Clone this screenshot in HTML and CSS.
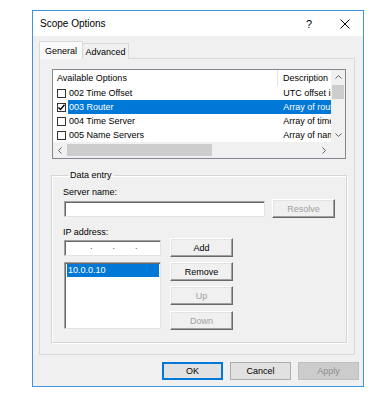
FILE: index.html
```html
<!DOCTYPE html>
<html>
<head>
    <meta charset="UTF-8">
    <title>Scope Options</title>
    <link rel="stylesheet" href="styles.css">
</head>
<body>
    <div class="dialog">
        <div class="titlebar">
            <span class="title">Scope Options</span>
            <span class="help">?</span>
            <span class="close">
                <svg width="10" height="10" viewBox="0 0 10 10"><path d="M0.5 0.5 L9.5 9.5 M9.5 0.5 L0.5 9.5" stroke="#000" stroke-width="1" fill="none"/></svg>
            </span>
        </div>

        <div class="content">
            <div class="tabs">
                <div class="tab active">General</div>
                <div class="tab">Advanced</div>
            </div>

            <div class="panel">
                <!-- options list -->
                <div class="listview">
                    <div class="lv-top">
                        <div class="lv-body">
                            <div class="lv-header">
                                <div class="hd-name">Available Options</div>
                                <div class="hd-desc">Description</div>
                            </div>
                            <div class="lv-row">
                                <span class="check"></span>
                                <div class="col-name">002 Time Offset</div>
                                <div class="col-desc">UTC offset in seconds</div>
                            </div>
                            <div class="lv-row selected">
                                <span class="check">
                                    <svg width="7" height="7" viewBox="0 0 7 7"><path d="M0.5 3.5 L2.5 5.5 L6.5 0.8" stroke="#000" stroke-width="1.4" fill="none"/></svg>
                                </span>
                                <div class="col-name">003 Router</div>
                                <div class="col-desc">Array of router addresses</div>
                            </div>
                            <div class="lv-row">
                                <span class="check"></span>
                                <div class="col-name">004 Time Server</div>
                                <div class="col-desc">Array of time servers</div>
                            </div>
                            <div class="lv-row">
                                <span class="check"></span>
                                <div class="col-name">005 Name Servers</div>
                                <div class="col-desc">Array of name servers</div>
                            </div>
                        </div>
                        <div class="vscroll">
                            <div class="arrow">
                                <svg width="7" height="4" viewBox="0 0 7 4"><path d="M0.5 3.5 L3.5 0.5 L6.5 3.5" stroke="#606060" fill="none"/></svg>
                            </div>
                            <div class="vthumb"></div>
                            <div class="track"></div>
                            <div class="arrow">
                                <svg width="7" height="4" viewBox="0 0 7 4"><path d="M0.5 0.5 L3.5 3.5 L6.5 0.5" stroke="#606060" fill="none"/></svg>
                            </div>
                        </div>
                    </div>
                    <div class="hscroll">
                        <div class="arrow">
                            <svg width="4" height="7" viewBox="0 0 4 7"><path d="M3.5 0.5 L0.5 3.5 L3.5 6.5" stroke="#606060" fill="none"/></svg>
                        </div>
                        <div class="hthumb"></div>
                        <div class="track"></div>
                        <div class="arrow">
                            <svg width="4" height="7" viewBox="0 0 4 7"><path d="M0.5 0.5 L3.5 3.5 L0.5 6.5" stroke="#606060" fill="none"/></svg>
                        </div>
                        <div class="corner"></div>
                    </div>
                </div>

                <fieldset class="group">
                    <legend>Data entry</legend>
                    <div class="label first">Server name:</div>
                    <div class="form-row">
                        <div class="field server"></div>
                        <div class="btn3d disabled resolve">Resolve</div>
                    </div>
                    <div class="label second">IP address:</div>
                    <div class="form-row">
                        <div class="field ip"><span>.</span><span>.</span><span>.</span></div>
                        <div class="btn3d side">Add</div>
                    </div>
                    <div class="list-row">
                        <div class="listbox">
                            <div class="lb-item">10.0.0.10</div>
                        </div>
                        <div class="side-buttons">
                            <div class="btn3d side">Remove</div>
                            <div class="btn3d side disabled up">Up</div>
                            <div class="btn3d side disabled down">Down</div>
                        </div>
                    </div>
                </fieldset>
            </div>

            <div class="buttons">
                <div class="btn default">OK</div>
                <div class="btn">Cancel</div>
                <div class="btn disabled">Apply</div>
            </div>
        </div>
    </div>
</body>
</html>
```

FILE: styles.css
```css
body {
    margin: 0;
    background-color: #fff;
    font-family: "Liberation Sans", Arial, sans-serif;
    font-size: 9px;
    color: #000;
}

.dialog {
    margin: 10px 0 0 32px;
    width: 332px;
    height: 377px;
    box-sizing: border-box;
    border: 1px solid #3f94dc;
    display: flex;
    flex-direction: column;
}

/* title bar */
.titlebar {
    height: 25px;
    background-color: #fff;
    display: flex;
    align-items: center;
    padding-left: 7px;
}

.title {
    flex: 1;
    font-size: 10px;
}

.help {
    width: 34px;
    font-size: 11px;
}

.close {
    display: flex;
    padding-right: 13px;
}

.content {
    flex: 1;
    background-color: #f0f0f0;
    padding: 5px 0 0 6px;
}

/* tabs */
.tabs {
    display: flex;
    align-items: flex-end;
    height: 18px;
    margin-bottom: -1px;
}

.tab {
    box-sizing: border-box;
    height: 16px;
    width: 47px;
    margin-left: -1px;
    border: 1px solid #d9d9d9;
    border-bottom: none;
    background-color: #f0f0f0;
    display: flex;
    align-items: center;
    justify-content: center;
    padding-top: 1px;
}

.tab.active {
    position: relative;
    z-index: 1;
    height: 18px;
    width: 44px;
    margin-left: 0;
    background-color: #f9f9f9;
    padding-top: 0;
}

.panel {
    box-sizing: border-box;
    width: 316px;
    height: 297px;
    border: 1px solid #d9d9d9;
    background-color: #f0f0f0;
    padding: 10px 0 0 12px;
}

/* list view */
.listview {
    box-sizing: border-box;
    width: 294px;
    height: 90px;
    border: 1px solid #828790;
    background-color: #fff;
    display: flex;
    flex-direction: column;
}

.lv-top {
    display: flex;
    height: 72px;
}

.lv-body {
    width: 278px;
    overflow: hidden;
}

.lv-header {
    display: flex;
    height: 16px;
    align-items: center;
}

.hd-name {
    width: 225px;
    box-sizing: border-box;
    padding-left: 4px;
    border-right: 1px solid #e5e5e5;
    line-height: 16px;
}

.hd-desc {
    padding-left: 5px;
    white-space: nowrap;
}

.lv-row {
    display: flex;
    height: 14px;
    align-items: center;
}

.check {
    box-sizing: border-box;
    width: 9px;
    height: 9px;
    margin: 0 2px 0 4px;
    border: 1px solid #333;
    background-color: #fff;
    display: flex;
    align-items: center;
    justify-content: center;
}

.col-name {
    width: 210px;
    height: 14px;
    line-height: 14px;
    padding-left: 1px;
}

.col-desc {
    width: 53px;
    height: 14px;
    line-height: 14px;
    padding-left: 5px;
    box-sizing: border-box;
    white-space: nowrap;
    overflow: hidden;
}

.lv-row.selected .col-name,
.lv-row.selected .col-desc {
    background-color: #0078d7;
    color: #fff;
}

/* scroll bars */
.vscroll {
    width: 14px;
    background-color: #f0f0f0;
    display: flex;
    flex-direction: column;
}

.vscroll .arrow {
    height: 14px;
    display: flex;
    align-items: center;
    justify-content: center;
}

.vthumb {
    height: 14px;
    margin: 1px 1px 0 1px;
    background-color: #cdcdcd;
}

.track {
    flex: 1;
}

.hscroll {
    height: 16px;
    display: flex;
    background-color: #f0f0f0;
}

.hscroll .arrow {
    width: 14px;
    display: flex;
    align-items: center;
    justify-content: center;
}

.hthumb {
    width: 145px;
    margin: 2px 0 2px 0;
    background-color: #cdcdcd;
}

.corner {
    width: 14px;
    background-color: #f0f0f0;
}

/* data entry group */
.group {
    margin: 10px 0 0 -1px;
    width: 296px;
    box-sizing: border-box;
    border: 1px solid #d5d5d5;
    box-shadow: 1px 1px 0 #fff, inset 1px 1px 0 #fff;
    padding: 0 0 12px 12px;
    min-width: 0;
}

.group legend {
    padding: 0 2px;
    margin-left: 4px;
    line-height: 12px;
}

.label {
    line-height: 12px;
    margin-left: -1px;
}

.label.first {
    margin-top: 5px;
}

.label.second {
    margin-top: 8px;
}

.form-row {
    display: flex;
    align-items: center;
    margin-top: 1px;
}

.label.second + .form-row {
    margin-top: 0;
}

.field {
    box-sizing: border-box;
    height: 16px;
    background-color: #fff;
    border: 1px solid;
    border-color: #a0a0a0 #e3e3e3 #e3e3e3 #a0a0a0;
    box-shadow: inset 1px 1px 0 #696969;
}

.field.server {
    width: 201px;
}

.field.ip {
    width: 97px;
    display: flex;
    gap: 20px;
    padding-left: 25px;
    line-height: 10px;
    color: #555;
}

.btn3d {
    box-sizing: border-box;
    width: 63px;
    height: 19px;
    background-color: #f0f0f0;
    border: 1px solid;
    border-color: #fff #696969 #696969 #fff;
    box-shadow: inset -1px -1px 0 #a0a0a0, inset 1px 1px 0 #e3e3e3;
    display: flex;
    align-items: center;
    justify-content: center;
}

.btn3d.disabled {
    color: #a0a0a0;
}

.btn3d.resolve {
    margin-left: 7px;
}

.btn3d.side {
    margin-left: 9px;
}

.list-row {
    display: flex;
    margin-top: 5px;
}

.listbox {
    box-sizing: border-box;
    width: 97px;
    height: 67px;
    background-color: #fff;
    border: 1px solid;
    border-color: #a0a0a0 #e3e3e3 #e3e3e3 #a0a0a0;
    box-shadow: inset 1px 1px 0 #696969;
    padding: 1px 1px 0 2px;
}

.lb-item {
    height: 13px;
    line-height: 13px;
    padding-left: 1px;
    background-color: #0078d7;
    color: #fff;
}

.side-buttons {
    display: flex;
    flex-direction: column;
}

.btn3d.up {
    margin-top: 5px;
}

.btn3d.down {
    margin-top: 6px;
}

/* dialog buttons */
.buttons {
    display: flex;
    justify-content: flex-end;
    gap: 7px;
    margin-top: 7px;
    padding-right: 4px;
}

.btn {
    box-sizing: border-box;
    width: 61px;
    height: 18px;
    background-color: #e1e1e1;
    border: 1px solid #adadad;
    display: flex;
    align-items: center;
    justify-content: center;
}

.btn.default {
    border-color: #0078d7;
    box-shadow: inset 0 0 0 1px #0078d7;
}

.btn.disabled {
    background-color: #cccccc;
    border-color: #bfbfbf;
    color: #8d8d8d;
}
```
